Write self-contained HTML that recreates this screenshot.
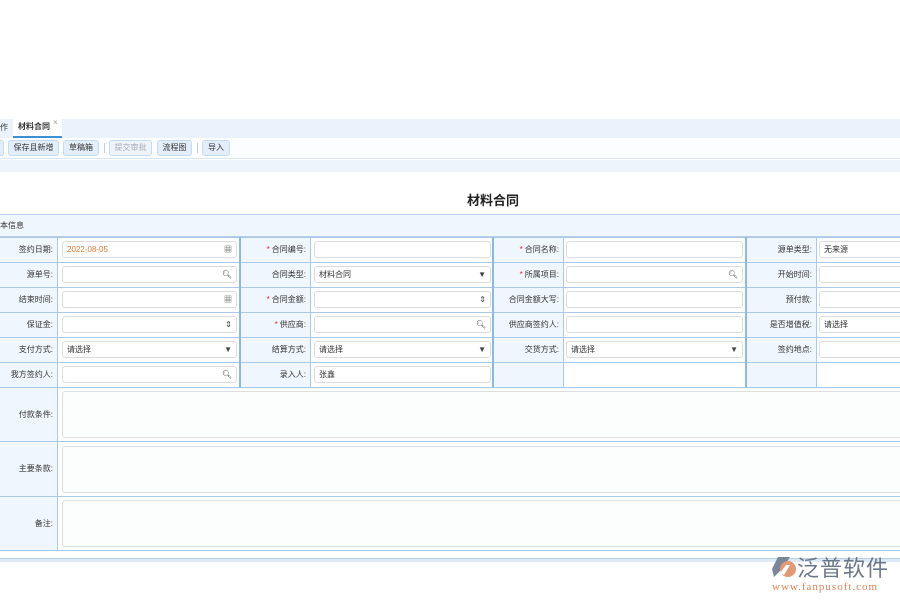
<!DOCTYPE html>
<html><head><meta charset="utf-8"><style>
*{box-sizing:border-box;margin:0;padding:0}
body{width:900px;height:600px;background:#fff;font-family:"Liberation Sans","Noto Sans CJK SC",sans-serif;font-size:8px;color:#333;position:relative;overflow:hidden}
.a{position:absolute}
.btn{position:absolute;top:140px;height:16px;border:1px solid #c5dcf0;background:#e3eefa;border-radius:3px;font-size:8px;line-height:14px;text-align:center;color:#333}
.lab{position:absolute;background:#f0f6fd;text-align:right;padding-right:4px;font-size:8px;color:#333}
.cell{position:absolute;background:#fff}
.inp{position:absolute;border:1px solid #dcdcdc;border-radius:3px;background:#fff;font-size:8px;line-height:15px;padding-left:4px;color:#333}
.ta{position:absolute;border:1px solid #ddd;border-radius:3px;background:#fcfdfd}
.r{color:#e22;margin-right:2px}
.ic{position:absolute;right:4px;top:0;font-size:8px;color:#444}
.vl{position:absolute;top:237px;width:2px;height:150px;background:#8fb8e0}
</style></head><body>
<div class="a" style="left:0;top:119px;width:900px;height:19px;background:#eaf3fc"></div>
<div class="a" style="left:0;top:122px;font-size:8px">作</div>
<div class="a" style="left:13px;top:119px;width:49px;height:19px;background:#fff;border-bottom:2px solid #3d8fd6;font-size:8px;line-height:16px;padding-left:5px;font-weight:bold">材料合同</div>
<div class="a" style="left:53px;top:118px;font-size:8px;color:#999">×</div>
<div class="a" style="left:0;top:138px;width:900px;height:21px;background:#fbfdff;border-bottom:1px solid #d5e5f3"></div>
<div class="btn" style="left:-5px;width:9px"></div>
<div class="btn" style="left:8px;width:51px">保存且新增</div>
<div class="btn" style="left:63px;width:36px">草稿箱</div>
<div class="a" style="left:104px;top:143px;width:1px;height:10px;background:#ccc"></div>
<div class="btn" style="left:109px;width:43px;color:#aab;background:#eef4fa">提交审批</div>
<div class="btn" style="left:157px;width:35px">流程图</div>
<div class="a" style="left:197px;top:143px;width:1px;height:10px;background:#ccc"></div>
<div class="btn" style="left:202px;width:28px">导入</div>
<div class="a" style="left:0;top:160px;width:900px;height:12px;background:#edf4fb"></div>
<div class="a" style="left:0;top:190px;width:900px;text-align:center;padding-left:86px;font-size:13px;font-weight:bold;color:#222">材料合同</div>
<div class="a" style="left:0;top:214px;width:900px;height:23px;background:#f0f6fd;border-top:1px solid #b7d0e8;border-bottom:1px solid #b7d0e8;font-size:8px;line-height:22px">本信息</div>
<div class="a" style="left:0;top:237px;width:900px;height:314px;background:#a9c9e8"></div>

<div class="lab" style="left:0;top:238px;width:57px;height:24px;line-height:24px">签约日期:</div>
<div class="cell" style="left:58px;top:238px;width:181px;height:24px"></div>
<div class="inp" style="left:62px;top:241px;width:175px;height:17px;color:#e07b39">2022-08-05<span class="ic">▦</span></div>
<div class="lab" style="left:241px;top:238px;width:69px;height:24px;line-height:24px"><span class="r">*</span>合同编号:</div>
<div class="cell" style="left:311px;top:238px;width:181px;height:24px"></div>
<div class="inp" style="left:314px;top:241px;width:177px;height:17px"></div>
<div class="lab" style="left:494px;top:238px;width:69px;height:24px;line-height:24px"><span class="r">*</span>合同名称:</div>
<div class="cell" style="left:564px;top:238px;width:181px;height:24px"></div>
<div class="inp" style="left:566px;top:241px;width:177px;height:17px"></div>
<div class="lab" style="left:747px;top:238px;width:69px;height:24px;line-height:24px">源单类型:</div>
<div class="cell" style="left:817px;top:238px;width:83px;height:24px"></div>
<div class="inp" style="left:819px;top:241px;width:90px;height:17px">无来源</div>

<div class="lab" style="left:0;top:263px;width:57px;height:24px;line-height:24px">源单号:</div>
<div class="cell" style="left:58px;top:263px;width:181px;height:24px"></div>
<div class="inp" style="left:62px;top:266px;width:175px;height:17px"><span class="ic">🔍︎</span></div>
<div class="lab" style="left:241px;top:263px;width:69px;height:24px;line-height:24px">合同类型:</div>
<div class="cell" style="left:311px;top:263px;width:181px;height:24px"></div>
<div class="inp" style="left:314px;top:266px;width:177px;height:17px">材料合同<span class="ic">▼</span></div>
<div class="lab" style="left:494px;top:263px;width:69px;height:24px;line-height:24px"><span class="r">*</span>所属项目:</div>
<div class="cell" style="left:564px;top:263px;width:181px;height:24px"></div>
<div class="inp" style="left:566px;top:266px;width:177px;height:17px"><span class="ic">🔍︎</span></div>
<div class="lab" style="left:747px;top:263px;width:69px;height:24px;line-height:24px">开始时间:</div>
<div class="cell" style="left:817px;top:263px;width:83px;height:24px"></div>
<div class="inp" style="left:819px;top:266px;width:90px;height:17px"></div>

<div class="lab" style="left:0;top:288px;width:57px;height:24px;line-height:24px">结束时间:</div>
<div class="cell" style="left:58px;top:288px;width:181px;height:24px"></div>
<div class="inp" style="left:62px;top:291px;width:175px;height:17px"><span class="ic">▦</span></div>
<div class="lab" style="left:241px;top:288px;width:69px;height:24px;line-height:24px"><span class="r">*</span>合同金额:</div>
<div class="cell" style="left:311px;top:288px;width:181px;height:24px"></div>
<div class="inp" style="left:314px;top:291px;width:177px;height:17px"><span class="ic">⇕</span></div>
<div class="lab" style="left:494px;top:288px;width:69px;height:24px;line-height:24px">合同金额大写:</div>
<div class="cell" style="left:564px;top:288px;width:181px;height:24px"></div>
<div class="inp" style="left:566px;top:291px;width:177px;height:17px"></div>
<div class="lab" style="left:747px;top:288px;width:69px;height:24px;line-height:24px">预付款:</div>
<div class="cell" style="left:817px;top:288px;width:83px;height:24px"></div>
<div class="inp" style="left:819px;top:291px;width:90px;height:17px"></div>

<div class="lab" style="left:0;top:313px;width:57px;height:24px;line-height:24px">保证金:</div>
<div class="cell" style="left:58px;top:313px;width:181px;height:24px"></div>
<div class="inp" style="left:62px;top:316px;width:175px;height:17px"><span class="ic">⇕</span></div>
<div class="lab" style="left:241px;top:313px;width:69px;height:24px;line-height:24px"><span class="r">*</span>供应商:</div>
<div class="cell" style="left:311px;top:313px;width:181px;height:24px"></div>
<div class="inp" style="left:314px;top:316px;width:177px;height:17px"><span class="ic">🔍︎</span></div>
<div class="lab" style="left:494px;top:313px;width:69px;height:24px;line-height:24px">供应商签约人:</div>
<div class="cell" style="left:564px;top:313px;width:181px;height:24px"></div>
<div class="inp" style="left:566px;top:316px;width:177px;height:17px"></div>
<div class="lab" style="left:747px;top:313px;width:69px;height:24px;line-height:24px">是否增值税:</div>
<div class="cell" style="left:817px;top:313px;width:83px;height:24px"></div>
<div class="inp" style="left:819px;top:316px;width:90px;height:17px">请选择</div>

<div class="lab" style="left:0;top:338px;width:57px;height:24px;line-height:24px">支付方式:</div>
<div class="cell" style="left:58px;top:338px;width:181px;height:24px"></div>
<div class="inp" style="left:62px;top:341px;width:175px;height:17px">请选择<span class="ic">▼</span></div>
<div class="lab" style="left:241px;top:338px;width:69px;height:24px;line-height:24px">结算方式:</div>
<div class="cell" style="left:311px;top:338px;width:181px;height:24px"></div>
<div class="inp" style="left:314px;top:341px;width:177px;height:17px">请选择<span class="ic">▼</span></div>
<div class="lab" style="left:494px;top:338px;width:69px;height:24px;line-height:24px">交货方式:</div>
<div class="cell" style="left:564px;top:338px;width:181px;height:24px"></div>
<div class="inp" style="left:566px;top:341px;width:177px;height:17px">请选择<span class="ic">▼</span></div>
<div class="lab" style="left:747px;top:338px;width:69px;height:24px;line-height:24px">签约地点:</div>
<div class="cell" style="left:817px;top:338px;width:83px;height:24px"></div>
<div class="inp" style="left:819px;top:341px;width:90px;height:17px"></div>

<div class="lab" style="left:0;top:363px;width:57px;height:24px;line-height:24px">我方签约人:</div>
<div class="cell" style="left:58px;top:363px;width:181px;height:24px"></div>
<div class="inp" style="left:62px;top:366px;width:175px;height:17px"><span class="ic">🔍︎</span></div>
<div class="lab" style="left:241px;top:363px;width:69px;height:24px;line-height:24px">录入人:</div>
<div class="cell" style="left:311px;top:363px;width:181px;height:24px"></div>
<div class="inp" style="left:314px;top:366px;width:177px;height:17px">张鑫</div>
<div class="lab" style="left:494px;top:363px;width:69px;height:24px"></div>
<div class="cell" style="left:564px;top:363px;width:181px;height:24px"></div>
<div class="lab" style="left:747px;top:363px;width:69px;height:24px"></div>
<div class="cell" style="left:817px;top:363px;width:83px;height:24px"></div>
<div class="vl" style="left:239px"></div>
<div class="vl" style="left:492px"></div>
<div class="vl" style="left:745px"></div>

<div class="lab" style="left:0;top:388px;width:57px;height:53px;line-height:53px">付款条件:</div>
<div class="cell" style="left:58px;top:388px;width:842px;height:53px"></div>
<div class="ta" style="left:62px;top:391px;width:850px;height:47px"></div>
<div class="lab" style="left:0;top:442px;width:57px;height:54px;line-height:54px">主要条款:</div>
<div class="cell" style="left:58px;top:442px;width:842px;height:54px"></div>
<div class="ta" style="left:62px;top:446px;width:850px;height:47px"></div>
<div class="lab" style="left:0;top:497px;width:57px;height:53px;line-height:53px">备注:</div>
<div class="cell" style="left:58px;top:497px;width:842px;height:53px"></div>
<div class="ta" style="left:62px;top:500px;width:850px;height:47px"></div>

<div class="a" style="left:0;top:558px;width:900px;height:4px;background:#dce9f6;border-top:1px solid #b7d0e8"></div>
<svg class="a" style="left:770px;top:555px" width="30" height="26" viewBox="0 0 30 26">
<path d="M8 2 L20 2 L14 12 L4 22 L2 14 Z" fill="#7a879b"/>
<circle cx="18" cy="14" r="8" fill="#e39a74"/>
<path d="M10 18 L16 10 L20 10 L14 20 Z" fill="#fff"/>
</svg>
<div class="a" style="left:797px;top:553px;font-size:22px;color:#6c7789;letter-spacing:1px;font-family:'Noto Sans CJK SC',sans-serif;line-height:28px">泛普软件</div>
<div class="a" style="left:772px;top:581px;font-size:11px;color:#d9865c;font-family:'Liberation Serif',serif;letter-spacing:1px">www.fanpusoft.com</div>
</body></html>
